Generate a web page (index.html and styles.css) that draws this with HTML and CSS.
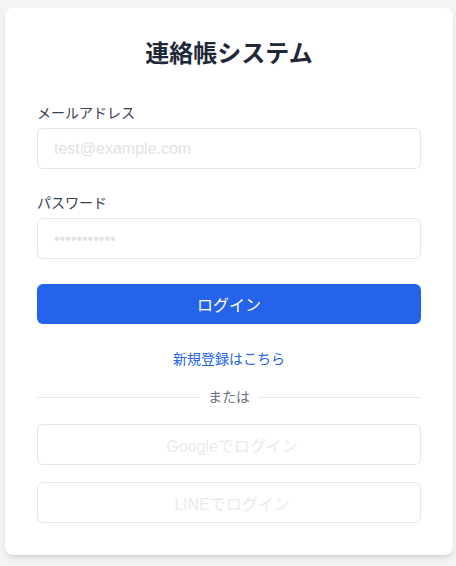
FILE: index.html
```html
<!DOCTYPE html>
<html lang="ja">
<head>
<meta charset="utf-8">
<title>連絡帳システム</title>
<link rel="stylesheet" href="styles.css">
</head>
<body>
<main class="card">
  <h1 class="title">連絡帳システム</h1>
  <form class="form">
    <div class="field">
      <label class="label" for="email">メールアドレス</label>
      <input class="input" id="email" type="email" placeholder="test@example.com">
    </div>
    <div class="field field-gap">
      <label class="label" for="password">パスワード</label>
      <input class="input" id="password" type="password" placeholder="•••••••••••">
    </div>
    <button class="btn-primary" type="button">ログイン</button>
  </form>
  <div class="register"><a class="link" href="#">新規登録はこちら</a></div>
  <div class="divider"><span class="divider-line"></span><span class="divider-text">または</span><span class="divider-line"></span></div>
  <button class="btn-outline btn-google" type="button">Googleでログイン</button>
  <button class="btn-outline btn-line" type="button">LINEでログイン</button>
</main>
</body>
</html>
```

FILE: styles.css
```css
* { box-sizing: border-box; }
html, body { margin: 0; padding: 0; }
body {
  background: #f3f4f6;
  font-family: "Liberation Sans", "Noto Sans CJK JP", sans-serif;
  padding: 8px 0 11px 5px;
}
.card {
  width: 448px;
  background: #ffffff;
  border-radius: 8px;
  box-shadow: 0 4px 6px -1px rgba(0,0,0,0.1), 0 2px 4px -2px rgba(0,0,0,0.1);
  padding: 32px 32px 32px;
  display: flex;
  flex-direction: column;
}
.title {
  margin: 0 0 35px;
  font-size: 24px;
  line-height: 28px;
  font-weight: 700;
  color: #1f2937;
  text-align: center;
}
.form { display: flex; flex-direction: column; margin: 0; }
.field { display: flex; flex-direction: column; }
.field-gap { margin-top: 24px; }
.label {
  font-size: 14px;
  line-height: 20px;
  color: #374151;
  margin-bottom: 5px;
}
.input {
  height: 41px;
  border: 1px solid #e5e7eb;
  border-radius: 6px;
  padding: 0 16px;
  font-family: inherit;
  font-size: 16px;
  color: #1f2937;
  background: #fff;
  outline: none;
}
.input::placeholder { color: #e2e2e4; opacity: 1; }
.btn-primary {
  margin-top: 25px;
  height: 40px;
  border: none;
  border-radius: 6px;
  background: #2563eb;
  color: #ffffff;
  font-family: inherit;
  font-size: 16px;
  cursor: pointer;
}
.register {
  margin-top: 25px;
  text-align: center;
  font-size: 14px;
  line-height: 20px;
}
.link { color: #2563eb; text-decoration: none; }
.divider {
  margin-top: 18px;
  display: flex;
  align-items: center;
  height: 20px;
}
.divider-line { flex: 1; height: 1px; background: #e5e7eb; }
.divider-text {
  padding: 0 8px;
  font-size: 14px;
  line-height: 20px;
  color: #6b7280;
}
.btn-outline {
  margin-top: 17px;
  height: 41px;
  border: 1px solid #e5e7eb;
  border-radius: 6px;
  background: #ffffff;
  color: #eaeaec;
  font-family: inherit;
  font-size: 16px;
  padding: 0 0 0 6px;
}
```
